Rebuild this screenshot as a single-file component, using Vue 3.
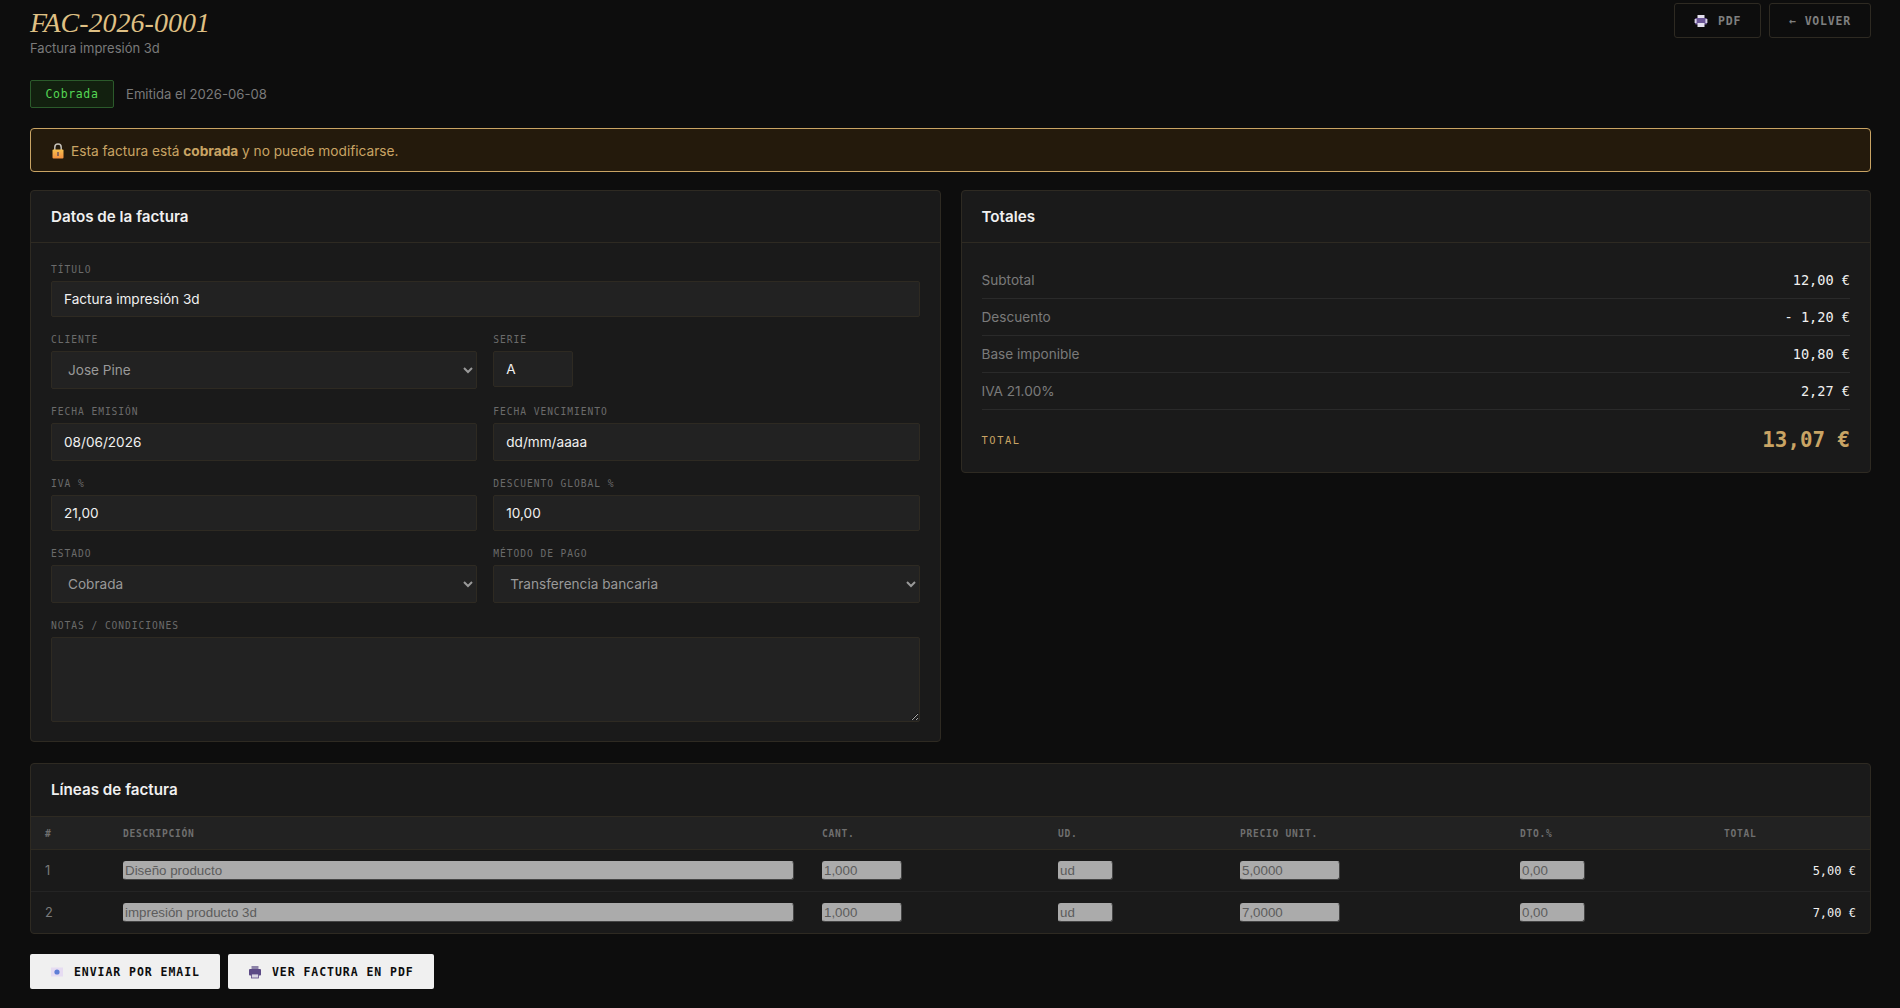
<template>
  <div class="page">
    <header class="page-head">
      <div>
        <h1 class="title">FAC-2026-0001</h1>
        <p class="subtitle">Factura impresión 3d</p>
      </div>
      <div class="head-actions">
        <button class="btn-ghost pdf">
          <svg class="ico" viewBox="0 0 14 14"><rect x="3.5" y="1" width="7" height="4" fill="#e4e0ee"/><rect x="1" y="4" width="12" height="6.5" rx="1" fill="#6a5596"/><rect x="0.6" y="5" width="2" height="4" fill="#d8d2e6"/><rect x="11.4" y="5" width="2" height="4" fill="#d8d2e6"/><rect x="3.5" y="9" width="7" height="4" fill="#e4e0ee"/></svg>
          PDF
        </button>
        <button class="btn-ghost">← VOLVER</button>
      </div>
    </header>

    <div class="status-row">
      <span class="badge">Cobrada</span>
      <span class="issued">Emitida el 2026-06-08</span>
    </div>

    <div class="alert">
      <svg class="lock" viewBox="0 0 12 16">
        <defs>
          <linearGradient id="lockBody" x1="0" y1="0" x2="0" y2="1">
            <stop offset="0" stop-color="#f7c04f" />
            <stop offset="1" stop-color="#f28f3f" />
          </linearGradient>
        </defs>
        <path d="M2.8 7V4.2a3.2 3.2 0 0 1 6.4 0V7" fill="none" stroke="#c4c0b8" stroke-width="1.5"/>
        <rect x="0.5" y="6.5" width="11" height="9" rx="1" fill="url(#lockBody)"/>
        <rect x="5.4" y="9" width="1.2" height="4" fill="#4b3a5e"/>
      </svg>
      <span>Esta factura está <b>cobrada</b> y no puede modificarse.</span>
    </div>

    <div class="two-col">
      <section class="card">
        <h2 class="card-head">Datos de la factura</h2>
        <div class="card-body">
          <div class="field">
            <label>Título</label>
            <input class="ctl" type="text" value="Factura impresión 3d" />
          </div>
          <div class="grid">
            <div class="field">
              <label>Cliente</label>
              <select class="ctl sel"><option>Jose Pine</option></select>
            </div>
            <div class="field">
              <label>Serie</label>
              <input class="ctl serie" type="text" value="A" />
            </div>
            <div class="field">
              <label>Fecha emisión</label>
              <input class="ctl date" type="text" value="08/06/2026" />
            </div>
            <div class="field">
              <label>Fecha vencimiento</label>
              <input class="ctl date" type="text" value="dd/mm/aaaa" />
            </div>
            <div class="field">
              <label>IVA %</label>
              <input class="ctl" type="text" value="21,00" />
            </div>
            <div class="field">
              <label>Descuento global %</label>
              <input class="ctl" type="text" value="10,00" />
            </div>
            <div class="field">
              <label>Estado</label>
              <select class="ctl sel"><option>Cobrada</option></select>
            </div>
            <div class="field">
              <label>Método de pago</label>
              <select class="ctl sel"><option>Transferencia bancaria</option></select>
            </div>
          </div>
          <div class="field last">
            <label>Notas / condiciones</label>
            <textarea class="ctl notes"></textarea>
          </div>
        </div>
      </section>

      <section class="card totals">
        <h2 class="card-head">Totales</h2>
        <div class="totals-body">
          <div v-for="t in totals" :key="t.label" class="tot-row">
            <span>{{ t.label }}</span>
            <span class="tot-val">{{ t.value }}</span>
          </div>
          <div class="tot-final">
            <span class="tot-label">TOTAL</span>
            <span class="tot-amount">13,07 €</span>
          </div>
        </div>
      </section>
    </div>

    <section class="card lines">
      <h2 class="card-head">Líneas de factura</h2>
      <table>
        <colgroup>
          <col class="c-n" /><col class="c-desc" /><col class="c-qty" /><col class="c-ud" /><col class="c-price" /><col class="c-dto" /><col class="c-total" />
        </colgroup>
        <thead>
          <tr>
            <th>#</th><th>Descripción</th><th>Cant.</th><th>Ud.</th><th>Precio unit.</th><th>Dto.%</th><th>Total</th>
          </tr>
        </thead>
        <tbody>
          <tr v-for="(l, i) in lines" :key="i">
            <td class="num">{{ i + 1 }}</td>
            <td><input class="cell w-desc" disabled :value="l.desc" /></td>
            <td><input class="cell w-qty" disabled :value="l.qty" /></td>
            <td><input class="cell w-ud" disabled :value="l.ud" /></td>
            <td><input class="cell w-price" disabled :value="l.price" /></td>
            <td><input class="cell w-dto" disabled :value="l.dto" /></td>
            <td class="line-total">{{ l.total }}</td>
          </tr>
        </tbody>
      </table>
    </section>

    <div class="actions">
      <button class="btn-light">
        <svg class="ico" viewBox="0 0 14 14"><rect x="1" y="2.5" width="12" height="9" fill="#e6dcf2"/><circle cx="7" cy="7" r="2.6" fill="#5f7fd6"/></svg>
        ENVIAR POR EMAIL
      </button>
      <button class="btn-light">
        <svg class="ico" viewBox="0 0 14 14"><rect x="3.5" y="1" width="7" height="4" fill="#8d83a8"/><rect x="1" y="4" width="12" height="6.5" rx="1" fill="#5c4a86"/><rect x="3.5" y="9" width="7" height="4" fill="#d9d5e3" stroke="#5c4a86" stroke-width="0.8"/></svg>
        VER FACTURA EN PDF
      </button>
    </div>
  </div>
</template>

<script setup>
const totals = [
  { label: 'Subtotal', value: '12,00 €' },
  { label: 'Descuento', value: '- 1,20 €' },
  { label: 'Base imponible', value: '10,80 €' },
  { label: 'IVA 21.00%', value: '2,27 €' },
]

const lines = [
  { desc: 'Diseño producto', qty: '1,000', ud: 'ud', price: '5,0000', dto: '0,00', total: '5,00 €' },
  { desc: 'impresión producto 3d', qty: '1,000', ud: 'ud', price: '7,0000', dto: '0,00', total: '7,00 €' },
]
</script>

<style>
body {
  background: #0d0d0d;
}
</style>

<style scoped>
.page {
  box-sizing: border-box;
  min-height: 1008px;
  padding: 0 29px 19px 30px;
  background: #0d0d0d;
  color: #f0f0f0;
  font-family: Inter, "Liberation Sans", sans-serif;
}
.page-head {
  display: flex;
  justify-content: space-between;
  align-items: flex-start;
  height: 80px;
}
.title {
  margin: 8px 0 0;
  font-family: "Liberation Serif", serif;
  font-style: italic;
  font-weight: 400;
  font-size: 28px;
  line-height: 30px;
  color: #dfc084;
}
.subtitle {
  margin: 1px 0 0;
  font-size: 13px;
  line-height: 18px;
  color: #7a7a7a;
}
.head-actions {
  display: flex;
  gap: 8px;
  align-items: center;
  padding-top: 3px;
}
.btn-ghost {
  display: flex;
  align-items: center;
  gap: 10px;
  height: 35px;
  padding: 0 19px;
  background: transparent;
  border: 1px solid #2e2a22;
  border-radius: 3px;
  color: #7f7f7f;
  font-family: "DejaVu Sans Mono", monospace;
  font-size: 11.5px;
  font-weight: 700;
  letter-spacing: 0.8px;
}
.ico {
  width: 14px;
  height: 14px;
  flex: none;
}
.status-row {
  display: flex;
  align-items: center;
  gap: 12px;
  height: 28px;
}
.badge {
  box-sizing: border-box;
  width: 84px;
  height: 28px;
  line-height: 26px;
  text-align: center;
  background: #12200f;
  border: 1px solid #2b5a2b;
  border-radius: 2px;
  color: #55d655;
  font-family: "DejaVu Sans Mono", monospace;
  font-size: 11.5px;
  letter-spacing: 0.65px;
}
.issued {
  font-size: 13.12px;
  color: #7a7a7a;
}
.alert {
  display: flex;
  align-items: center;
  gap: 7px;
  box-sizing: border-box;
  height: 44px;
  margin: 20px 0 18px;
  padding: 1px 20px 0 21px;
  background: #241a0c;
  border: 1px solid #c9a464;
  border-radius: 4px;
  color: #c9a464;
  font-size: 13.68px;
}
.alert b {
  font-weight: 700;
}
.lock {
  width: 12px;
  height: 16px;
  flex: none;
}
.two-col {
  display: grid;
  grid-template-columns: 1fr 1fr;
  gap: 20px;
  align-items: start;
}
.card {
  background: #1a1a1a;
  border: 1px solid #2e2a22;
  border-radius: 4px;
}
.card-head {
  box-sizing: border-box;
  height: 52px;
  margin: 0;
  padding: 0 20px;
  line-height: 52px;
  font-size: 15.2px;
  font-weight: 600;
  color: #f0f0f0;
  border-bottom: 1px solid #2e2a22;
}
.card-body {
  padding: 20px 20px 19px;
}
.grid {
  display: grid;
  grid-template-columns: 1fr 1fr;
  column-gap: 16px;
}
.field {
  display: flex;
  flex-direction: column;
  align-items: flex-start;
  margin-bottom: 16px;
}
.field.last {
  margin-bottom: 0;
}
.field label {
  height: 12px;
  margin-bottom: 6px;
  line-height: 14px;
  font-family: "DejaVu Sans Mono", monospace;
  font-size: 9.6px;
  letter-spacing: 0.96px;
  text-transform: uppercase;
  color: #6b6b6b;
}
.ctl {
  box-sizing: border-box;
  width: 100%;
  height: 36px;
  padding: 0 12px;
  background: #222222;
  border: 1px solid #2e2a22;
  border-radius: 2px;
  color: #f0f0f0;
  font-family: Inter, "Liberation Sans", sans-serif;
  font-size: 13.6px;
  outline: none;
}
.sel {
  height: 38px;
  color: #999999;
}
.date {
  height: 38px;
}
.serie {
  width: 80px;
}
.notes {
  display: block;
  height: 85px;
  padding: 10px 12px;
}
.totals-body {
  padding: 19px 20px 0;
}
.tot-row {
  display: flex;
  box-sizing: border-box;
  justify-content: space-between;
  align-items: center;
  height: 37px;
  border-bottom: 1px solid #2a2a2a;
  font-size: 13.6px;
  color: #7a7a7a;
}
.tot-val {
  font-family: "DejaVu Sans Mono", monospace;
  color: #f0f0f0;
}
.tot-final {
  display: flex;
  box-sizing: border-box;
  justify-content: space-between;
  align-items: center;
  height: 62px;
  padding-bottom: 2px;
}
.tot-label {
  font-family: "DejaVu Sans Mono", monospace;
  font-size: 10.4px;
  letter-spacing: 1.56px;
  color: #c9a464;
}
.tot-amount {
  font-family: "DejaVu Sans Mono", monospace;
  font-size: 20.8px;
  font-weight: 700;
  color: #c9a464;
}
.lines {
  margin-top: 21px;
  overflow: hidden;
}
.lines .card-head {
  border-bottom: 0;
}
table {
  width: 100%;
  table-layout: fixed;
  border-collapse: collapse;
}
.c-n { width: 78px; }
.c-desc { width: 699px; }
.c-qty { width: 236px; }
.c-ud { width: 182px; }
.c-price { width: 280px; }
.c-dto { width: 204px; }
th {
  height: 32px;
  padding: 0 14px;
  text-align: left;
  background: #222222;
  border-top: 1px solid #2e2a22;
  border-bottom: 1px solid #2e2a22;
  font-family: "DejaVu Sans Mono", monospace;
  font-size: 9.6px;
  font-weight: 700;
  letter-spacing: 0.72px;
  text-transform: uppercase;
  color: #6f6f6f;
}
td {
  height: 41px;
  padding: 0 14px;
  border-bottom: 1px solid #242424;
}
tbody tr:last-child td {
  border-bottom: 0;
}
.num {
  font-size: 12.8px;
  color: #7a7a7a;
}
.cell {
  display: block;
  box-sizing: border-box;
  height: 19px;
  padding: 0 1px;
  background: #ababab;
  border: 1px solid #ababab;
  border-bottom-color: #444444;
  border-right-color: #444444;
  border-radius: 3px;
  color: #5c5c5c;
  font-family: "Liberation Sans", sans-serif;
  font-size: 13.33px;
}
.w-desc { width: 671px; }
.w-qty { width: 80px; }
.w-ud { width: 55px; }
.w-price { width: 100px; }
.w-dto { width: 65px; }
.line-total {
  text-align: right;
  font-family: "DejaVu Sans Mono", monospace;
  font-size: 12px;
  color: #f0f0f0;
}
.actions {
  display: flex;
  gap: 8px;
  margin-top: 20px;
}
.btn-light {
  display: flex;
  align-items: center;
  gap: 10px;
  height: 35px;
  padding: 0 20px;
  background: #f0f0f0;
  border: 0;
  border-radius: 2px;
  color: #0d0d0d;
  font-family: "DejaVu Sans Mono", monospace;
  font-size: 11.5px;
  font-weight: 700;
  letter-spacing: 0.95px;
}
</style>
